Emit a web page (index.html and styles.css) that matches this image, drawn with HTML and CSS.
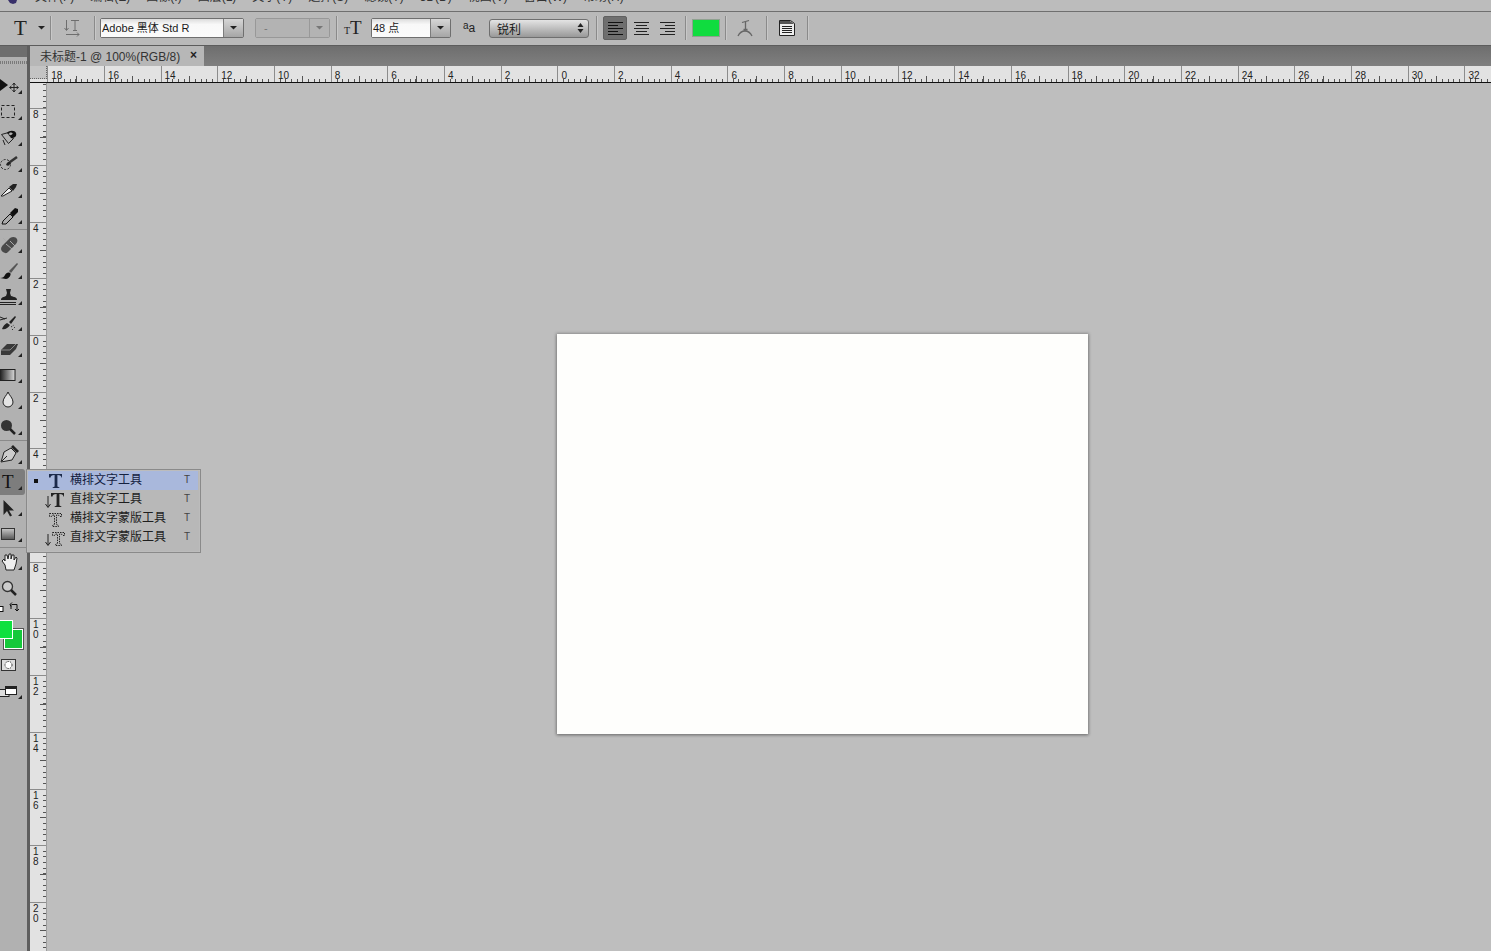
FILE: index.html
```html
<!DOCTYPE html>
<html lang="zh">
<head>
<meta charset="utf-8">
<title>未标题-1</title>
<link rel="stylesheet" href="styles.css">
</head>
<body>
<header class="menubar">
  <svg class="ps-logo" width="10" height="6" viewBox="0 0 10 6"><path d="M0 0h9l-1 3-3 1-3-1z" fill="#38306a"/></svg>
  <nav class="menu-row">
    <span>文件(F)</span><span>编辑(E)</span><span>图像(I)</span><span>图层(L)</span><span>文字(Y)</span><span>选择(S)</span><span>滤镜(T)</span><span>3D(D)</span><span>视图(V)</span><span>窗口(W)</span><span>帮助(H)</span>
  </nav>
</header>

<section class="options">
  <span class="glyph-t">T</span>
  <svg class="opt-arrow" width="7" height="4" viewBox="0 0 7 4"><path d="M0 0h7L3.500 3.500z" fill="#222"/></svg>
  <i class="sep sep-a"></i>
  <svg class="orient" width="17" height="18" viewBox="0 0 17 18" fill="none" stroke="#6e6e6e"><path d="M7 1.500h8M11 1.500v10M9 11.500h4M2.500 1v10M.5 9l2 2.500L4.500 9M2 15.500h13M13 13.500l2 2-2 2"/></svg>
  <i class="sep sep-b"></i>
  <div class="combo combo-font"><span class="combo-value">Adobe 黑体 Std R</span><b class="combo-btn"><svg width="7" height="4" viewBox="0 0 7 4"><path d="M0 0h7L3.500 3.500z" fill="#222"/></svg></b></div>
  <div class="combo combo-off"><span class="combo-value">-</span><b class="combo-btn"><svg width="7" height="4" viewBox="0 0 7 4"><path d="M0 0h7L3.500 3.500z" fill="#777"/></svg></b></div>
  <i class="sep sep-c"></i>
  <span class="size-glyph"><small>T</small>T</span>
  <div class="combo combo-size"><span class="combo-value">48 点</span><b class="combo-btn"><svg width="7" height="4" viewBox="0 0 7 4"><path d="M0 0h7L3.500 3.500z" fill="#222"/></svg></b></div>
  <span class="aa-glyph"><sup>a</sup>a</span>
  <div class="select-aa"><span>锐利</span><svg width="7" height="10" viewBox="0 0 7 10"><path d="M3.500 0L6.500 4h-6zM3.500 10L.5 6h6z" fill="#222"/></svg></div>
  <i class="sep sep-d"></i>
  <div class="align pressed"><svg width="16" height="14" viewBox="0 0 16 14" stroke="#111"><path d="M1 1.500h15M1 4.500h10M1 7.500h15M1 10.500h10M1 13.500h15"/></svg></div>
  <div class="align"><svg width="16" height="14" viewBox="0 0 16 14" stroke="#222"><path d="M1 1.500h15M3 4.500h11M1 7.500h15M3 10.500h11M1 13.500h15"/></svg></div>
  <div class="align"><svg width="16" height="14" viewBox="0 0 16 14" stroke="#222"><path d="M1 1.500h15M6 4.500h10M1 7.500h15M6 10.500h10M1 13.500h15"/></svg></div>
  <i class="sep sep-e"></i>
  <div class="swatch"></div>
  <i class="sep sep-f"></i>
  <svg class="warp" width="16" height="19" viewBox="0 0 16 19" fill="none" stroke="#666" stroke-width="1.300"><path d="M5 3.500L12 1.500M8.500 2.500v8M6.500 10.500h4M1 17c2-4 4-5 7-5s5 1 7 5"/></svg>
  <i class="sep sep-g"></i>
  <svg class="panel" width="16" height="16" viewBox="0 0 16 16"><path d="M.5.5h11l4 3v12H.5z" fill="#eee" stroke="#222"/><path d="M1 1h10l4 3H1z" fill="#555"/><path d="M3 6.500h10M3 8.500h10M3 10.500h10M3 12.500h10" stroke="#222"/></svg>
  <i class="sep sep-h"></i>
</section>

<main class="main">
  <aside class="toolbar">
    <div class="tb-head"></div>
    <div class="tb-grip"></div>

    <div class="tool more"><svg width="26" height="26" viewBox="0 0 26 26"><path d="M0 6l8 6-8 6z" fill="#111"/><path d="M10 14.500h8M14 10.500v8M11.500 13l-2 1.500 2 1.500M16.500 13l2 1.500-2 1.500M12.500 12l1.500-2 1.500 2M12.500 17l1.500 2 1.500-2" fill="none" stroke="#222"/></svg></div>
    <div class="tool more"><svg width="26" height="26" viewBox="0 0 26 26"><rect x="1.500" y="6.500" width="13" height="12" fill="none" stroke="#222" stroke-dasharray="3 2"/></svg></div>
    <div class="tool more"><svg width="26" height="26" viewBox="0 0 26 26"><path d="M1.500 9.500l7 9 5-5c-3-1-5-3-5-6z" fill="none" stroke="#222"/><path d="M7 8c2-3 8-3 9 0s-1 5-5 5l-1-3c3 0 3-2 2-2-1-1-3 0-4 1z" fill="#111"/><path d="M3 15l2 5" stroke="#222"/></svg></div>
    <div class="tool more"><svg width="26" height="26" viewBox="0 0 26 26"><circle cx="5.500" cy="13.500" r="5" fill="none" stroke="#222" stroke-dasharray="2 1.500"/><path d="M6 14c1-3 3-4 5-4l-1 3c-1 2-2 2-4 1z" fill="#222"/><path d="M10 11l7-5" stroke="#333" stroke-width="2.500"/></svg></div>
    <div class="tool more"><svg width="26" height="26" viewBox="0 0 26 26"><path d="M1 19l8-8 3 3-9 5z" fill="#eee" stroke="#222"/><path d="M9 10l4-3 4 0-1 3-3 4z" fill="#222"/></svg></div>
    <div class="tool more"><svg width="26" height="26" viewBox="0 0 26 26"><path d="M2 21l1-3 7-7 3 3-7 7z" fill="#aaa" stroke="#111"/><path d="M10 10l5-5 3 1 0 3-5 5z" fill="#111"/></svg></div>
    <i class="tb-sep"></i>
    <div class="tool more"><svg width="26" height="26" viewBox="0 0 26 26"><path d="M3 20c-3-2-2-5 0-7l7-7c3-2 6-1 7 1s0 4-2 6l-7 7c-2 2-3 1-5 0z" fill="#4a4a4a"/><path d="M6 12l6 5M10 9l5 5M3 6l3 3" stroke="#aaa"/></svg></div>
    <div class="tool more"><svg width="26" height="26" viewBox="0 0 26 26"><path d="M9 13L17 5l1 1-7 9z" fill="#555"/><path d="M0 20c3 0 4-1 5-3s3-3 5-2-1 6-4 6z" fill="#111"/></svg></div>
    <div class="tool more"><svg width="26" height="26" viewBox="0 0 26 26"><path d="M6 5h5l-1 4 1 3c3 1 6 1 6 4H1c0-3 3-3 5-4l1-3z" fill="#222"/><path d="M0 18.500h16M0 20.500h16" stroke="#222"/></svg></div>
    <div class="tool more"><svg width="26" height="26" viewBox="0 0 26 26"><path d="M0 10l7-2M0 7l5 2" stroke="#222"/><path d="M2 19c1-3 3-5 5-6l3 2c-2 3-5 5-8 4zM9 12l6-6 1 1-5 7z" fill="#222"/><path d="M11 17l3-2M12 20l3-3" stroke="#333" stroke-dasharray="1.500 1.500"/></svg></div>
    <div class="tool more"><svg width="26" height="26" viewBox="0 0 26 26"><path d="M1 14l6-6h11l-2 5-6 6H1z" fill="#3a3a3a"/><path d="M1 14h9l6-6" fill="none" stroke="#888"/></svg></div>
    <div class="tool more"><svg width="26" height="26" viewBox="0 0 26 26"><defs><linearGradient id="grad"><stop offset="0" stop-color="#111"/><stop offset="1" stop-color="#ddd"/></linearGradient></defs><rect x="-1" y="7.500" width="16" height="11" fill="url(#grad)" stroke="#222"/></svg></div>
    <div class="tool more"><svg width="26" height="26" viewBox="0 0 26 26"><path d="M8 4c1 3 5 6 5 10a5 5 0 0 1-10 0c0-4 4-7 5-10z" fill="#e4e4e4" stroke="#222"/></svg></div>
    <div class="tool more"><svg width="26" height="26" viewBox="0 0 26 26"><circle cx="6.500" cy="11.500" r="5.500" fill="#333"/><path d="M10 15l5 5" stroke="#222" stroke-width="2.500"/></svg></div>
    <i class="tb-sep"></i>
    <div class="tool more"><svg width="26" height="26" viewBox="0 0 26 26"><path d="M1 19l3-10 7-4 5 5-4 7z" fill="#ccc" stroke="#222"/><path d="M11 4l2-2 6 6-2 2z" fill="#222"/><path d="M2 18l5-5" stroke="#222"/></svg></div>
    <div class="tool more active"><span class="tool-t">T</span></div>
    <div class="tool more"><svg width="26" height="26" viewBox="0 0 26 26"><path d="M3.500 5v15l3.500-4 3 5.500 2-1-3-5h5z" fill="#222"/></svg></div>
    <div class="tool more"><svg width="26" height="26" viewBox="0 0 26 26"><defs><linearGradient id="rect" x2="0" y2="1"><stop offset="0" stop-color="#c8c8c8"/><stop offset="1" stop-color="#555"/></linearGradient></defs><rect x="1.500" y="7.500" width="13" height="11" fill="url(#rect)" stroke="#333"/></svg></div>
    <i class="tb-sep tb-sep-thin"></i>
    <div class="tool more"><svg width="26" height="26" viewBox="0 0 26 26"><path d="M2 12l3 4 1 5h8l2-6 1-6-1-1-2 3V6h-2l-1 4V5H9L8 10 7 6H5v6l-1-2z" fill="#eee" stroke="#222"/></svg></div>
    <div class="tool"><svg width="26" height="26" viewBox="0 0 26 26"><circle cx="7.500" cy="11.500" r="5" fill="#ccc" stroke="#333" stroke-width="1.300"/><path d="M11 15l5 5" stroke="#222" stroke-width="2.500"/></svg></div>

    <div class="swap-row">
      <svg width="26" height="14" viewBox="0 0 26 14" fill="none" stroke="#111"><rect x="-2" y="5.500" width="5" height="5" fill="#fff"/><path d="M12 3.500h5v6M11 5.500l-1-2 2-2M15 8l2 2 2-2M11 3v5" /></svg>
    </div>
    <div class="colors"><div class="col-bg"></div><div class="col-fg"></div></div>
    <div class="mask"><svg width="26" height="14" viewBox="0 0 26 14"><rect x="1.500" y="1.500" width="14" height="11" fill="#ddd" stroke="#333"/><circle cx="8.500" cy="7" r="3.500" fill="#fff" stroke="#333" stroke-dasharray="1.500 1"/></svg></div>
    <div class="tool more screen"><svg width="26" height="26" viewBox="0 0 26 26"><rect x="-1" y="11.500" width="10" height="7" fill="#ddd" stroke="#222"/><rect x="5.500" y="8.500" width="11" height="8" fill="#fff" stroke="#222"/><path d="M6 9h10v2H6z" fill="#222"/></svg></div>
  </aside>

  <div class="doc-area">
    <div class="tabbar"><div class="tab"><span>未标题-1 @ 100%(RGB/8)</span><b class="tab-x">×</b></div></div>
    <div class="ruler-h">
      <div class="corner"></div>
      <div class="rh-cell">18</div><div class="rh-cell">16</div><div class="rh-cell">14</div><div class="rh-cell">12</div><div class="rh-cell">10</div><div class="rh-cell">8</div><div class="rh-cell">6</div><div class="rh-cell">4</div><div class="rh-cell">2</div><div class="rh-cell">0</div><div class="rh-cell">2</div><div class="rh-cell">4</div><div class="rh-cell">6</div><div class="rh-cell">8</div><div class="rh-cell">10</div><div class="rh-cell">12</div><div class="rh-cell">14</div><div class="rh-cell">16</div><div class="rh-cell">18</div><div class="rh-cell">20</div><div class="rh-cell">22</div><div class="rh-cell">24</div><div class="rh-cell">26</div><div class="rh-cell">28</div><div class="rh-cell">30</div><div class="rh-cell">32</div>
    </div>
    <div class="work-row">
      <div class="ruler-v">
        <div class="rv-cell rv-first"></div>
        <div class="rv-cell">8</div><div class="rv-cell">6</div><div class="rv-cell">4</div><div class="rv-cell">2</div><div class="rv-cell">0</div><div class="rv-cell">2</div><div class="rv-cell">4</div><div class="rv-cell">6</div><div class="rv-cell">8</div><div class="rv-cell">10</div><div class="rv-cell">12</div><div class="rv-cell">14</div><div class="rv-cell">16</div><div class="rv-cell">18</div><div class="rv-cell">20</div>
      </div>
      <div class="workspace"><div class="canvas"></div></div>
    </div>
  </div>
</main>

<div class="flyout">
  <div class="fly-row selected"><i class="fly-dot"></i><svg class="fly-icon" width="20" height="18" viewBox="0 0 20 18"><path d="M4 2h13v3.600h-.6c0-1.600-1-2.600-4-2.600v11.600l2 .8v.6H7.600v-.6l2-.8V3c-3 0-4 1-4 2.600H4z" fill="#1c2a4a"/></svg><span class="fly-label">横排文字工具</span><span class="fly-key">T</span></div>
  <div class="fly-row"><i class="fly-dot none"></i><svg class="fly-icon" width="20" height="18" viewBox="0 0 20 18"><path d="M6 2h13v3.600h-.6c0-1.600-1-2.600-4-2.600v11.600l2 .8v.6H9.600v-.6l2-.8V3c-3 0-4 1-4 2.600H6z" fill="#222"/><path d="M3 5v11M.5 13L3 16.500 5.500 13" fill="none" stroke="#222"/></svg><span class="fly-label">直排文字工具</span><span class="fly-key">T</span></div>
  <div class="fly-row"><i class="fly-dot none"></i><svg class="fly-icon" width="20" height="18" viewBox="0 0 20 18"><path d="M4.500 3.500h12v3h-2c0-1-1-1.500-3-1.500v9.500l2 1v1h-6v-1l2-1V5c-2 0-3 .5-3 1.500h-2z" fill="none" stroke="#222" stroke-dasharray="1.500 1"/></svg><span class="fly-label">横排文字蒙版工具</span><span class="fly-key">T</span></div>
  <div class="fly-row"><i class="fly-dot none"></i><svg class="fly-icon" width="20" height="18" viewBox="0 0 20 18"><path d="M7.500 3.500h12v3h-2c0-1-1-1.500-3-1.500v9.500l2 1v1h-6v-1l2-1V5c-2 0-3 .5-3 1.500h-2z" fill="none" stroke="#222" stroke-dasharray="1.500 1"/><path d="M3 5v11M.5 13L3 16.500 5.500 13" fill="none" stroke="#222"/></svg><span class="fly-label">直排文字蒙版工具</span><span class="fly-key">T</span></div>
</div>
</body>
</html>
```
FILE: styles.css
```css
* { box-sizing: border-box; }
html, body { margin: 0; height: 951px; overflow: hidden; }
body {
  background: #bebebe;
  color: #1a1a1a;
  font-family: "Liberation Sans", "Noto Sans CJK SC", sans-serif;
  font-size: 11px;
  display: flex;
  flex-direction: column;
  position: relative;
}
svg { display: block; flex: none; }

.menubar {
  height: 12px;
  flex: none;
  background: #bcbcbc;
  border-bottom: 1px solid #6f6f6f;
  overflow: hidden;
  display: flex;
  align-items: flex-start;
  padding-left: 8px;
}
.ps-logo { margin-top: 0; }
.menu-row {
  display: flex;
  gap: 16px;
  margin-left: 17px;
  margin-top: -9px;
  font-size: 12px;
  line-height: 12px;
  color: #333;
}

.options {
  height: 34px;
  flex: none;
  background: #b9b9b9;
  border-bottom: 1px solid #5c5c5c;
  display: flex;
  align-items: center;
  padding-bottom: 1px;
}
.glyph-t {
  font: 21px/24px "Liberation Serif", serif;
  margin-left: 14px;
  width: 14px;
  color: #222;
}
.opt-arrow { margin-left: 10px; }
.sep { display: block; width: 1px; height: 24px; background: #8a8a8a; flex: none; box-shadow: 1px 0 0 #c8c8c8; }
.sep-a { margin-left: 5px; }
.orient { margin-left: 13px; }
.sep-b { margin-left: 13px; }
.combo {
  height: 20px;
  display: flex;
  border: 1px solid #6f6f6f;
  border-radius: 2px;
  flex: none;
  font-size: 11px;
  line-height: 18px;
}
.combo-value { flex: 1; padding-left: 1px; background: linear-gradient(#dcdcdc, #f8f8f8 30%, #fbfbfb); white-space: nowrap; overflow: hidden; }
.combo-btn {
  width: 20px;
  flex: none;
  background: linear-gradient(#d6d6d6, #a6a6a6);
  border-left: 1px solid #7c7c7c;
  display: flex;
  align-items: center;
  justify-content: center;
}
.combo-font { width: 144px; margin-left: 5px; }
.combo-off { width: 75px; margin-left: 11px; border-color: #989898; color: #777; }
.combo-off .combo-value { background: #b3b3b3; padding-left: 8px; }
.combo-off .combo-btn { background: #b3b3b3; border-left-color: #999; }
.sep-c { margin-left: 6px; }
.size-glyph { font: 19px/24px "Liberation Serif", serif; margin-left: 7px; width: 17px; display: flex; align-items: flex-end; color: #222; }
.size-glyph small { font-size: 10px; line-height: 19px; }
.combo-size { width: 80px; margin-left: 10px; }
.aa-glyph { font: 12px/16px "Liberation Sans", sans-serif; margin-left: 12px; width: 14px; color: #222; display: flex; align-items: flex-end; }
.aa-glyph sup { font-size: 10px; line-height: 12px; vertical-align: baseline; align-self: flex-start; }
.select-aa {
  width: 100px;
  height: 19px;
  margin-left: 12px;
  border: 1px solid #6f6f6f;
  border-radius: 3px;
  background: linear-gradient(#e4e4e4, #989898);
  flex: none;
  display: flex;
  align-items: center;
  justify-content: space-between;
  padding: 0 4px 0 7px;
  font-size: 12px;
}
.sep-d { margin-left: 7px; }
.align { width: 24px; height: 24px; margin-left: 2px; display: flex; align-items: center; justify-content: center; flex: none; border-radius: 2px; }
.align.pressed { background: #6f6f6f; border: 1px solid #606060; margin-left: 6px; }
.sep-e { margin-left: 6px; }
.swatch { width: 28px; height: 18px; margin-left: 6px; background: #10dc3f; border: 1px solid #8fa08f; flex: none; }
.sep-f { margin-left: 5px; }
.warp { margin-left: 11px; }
.sep-g { margin-left: 13px; }
.panel { margin-left: 12px; }
.sep-h { margin-left: 12px; }

.main { flex: 1; display: flex; min-height: 0; }

.toolbar {
  width: 30px;
  flex: none;
  background: #b1b1b1;
  border-right: 3px solid #5e5e5e;
  display: flex;
  flex-direction: column;
}
.tb-head { height: 11px; flex: none; background: #6e6e6e; }
.tb-grip {
  height: 16px;
  flex: none;
  background: repeating-linear-gradient(90deg, #7a7a7a 0 1px, transparent 1px 2px) 0 4px / 100% 3px no-repeat;
}
.tool { height: 26px; flex: none; position: relative; }
.tool.more::after {
  content: "";
  position: absolute;
  left: 18px;
  top: 17px;
  width: 4px;
  height: 4px;
  background: #222;
  clip-path: polygon(100% 0, 100% 100%, 0 100%);
}
.tool.active { background: #7d7d7d; border-radius: 0 3px 3px 0; width: 25px; }
.tool-t { display: block; font: 19px/26px "Liberation Serif", serif; padding-left: 2px; color: #111; }
.tb-sep { display: block; height: 3px; flex: none; border-top: 1px solid #8a8a8a; border-bottom: 1px solid #b1b1b1; }
.tb-sep-thin { height: 2px; }
.swap-row { height: 15px; flex: none; }
.colors { height: 35px; margin-top: 2px; flex: none; position: relative; }
.col-fg { position: absolute; left: -2px; top: 2px; width: 15px; height: 19px; background: #0fe03f; border: 1px solid #fff; }
.col-bg { position: absolute; left: 4px; top: 11px; width: 19px; height: 20px; background: #15c83a; border: 1px solid #fff; outline: 1px solid #555; }
.mask { height: 14px; flex: none; margin-top: 5px; }
.screen { margin-top: 6px; }

.doc-area { flex: 1; min-width: 0; display: flex; flex-direction: column; }
.tabbar {
  height: 20px;
  flex: none;
  background: linear-gradient(#6e6e6e, #7f7f7f);
  display: flex;
}
.tab {
  width: 174px;
  background: #b7b7b7;
  display: flex;
  align-items: center;
  justify-content: space-between;
  padding: 0 7px 2px 10px;
  font-size: 12px;
  color: #333;
  white-space: nowrap;
}
.tab-x { font-size: 12px; color: #222; }

.ruler-h {
  height: 17px;
  flex: none;
  display: flex;
  background: #e2e2e2;
  border-bottom: 1px solid #111;
  overflow: hidden;
}
.corner {
  width: 17.2px;
  flex: none;
  background: #c4c4c4;
  border-right: 1px dotted #666;
  border-bottom: 1px dotted #666;
  margin-bottom: 3px;
}
.rh-cell {
  width: 56.7px;
  flex: none;
  padding: 4px 0 0 4px;
  font-size: 10px;
  line-height: 11px;
  color: #222;
  background:
    linear-gradient(#8c8c8c, #8c8c8c) 0 0 / 1px 100% no-repeat,
    linear-gradient(#555, #555) 28.35px 100% / 1px 6px no-repeat,
    repeating-linear-gradient(90deg, #555 0 1px, transparent 1px 5.67px) 0 100% / 100% 3px no-repeat;
}
.work-row { flex: 1; display: flex; min-height: 0; }
.ruler-v {
  width: 17px;
  flex: none;
  background: #e2e2e2;
  border-right: 1px solid #9c9c9c;
  overflow: hidden;
}
.rv-cell {
  height: 56.7px;
  width: 16px;
  padding: 2px 6px 0 3px;
  font-size: 10px;
  line-height: 10px;
  color: #222;
  word-break: break-all;
  background:
    linear-gradient(#8c8c8c, #8c8c8c) 0 0 / 100% 1px no-repeat,
    linear-gradient(#555, #555) 100% 28.35px / 6px 1px no-repeat,
    repeating-linear-gradient(180deg, #555 0 1px, transparent 1px 5.67px) 100% 0 / 3px 100% no-repeat;
}
.rv-first { height: 25.3px; background: repeating-linear-gradient(0deg, #555 0 1px, transparent 1px 5.67px) 100% 0 / 3px 100% no-repeat; }
.workspace { flex: 1; background: #bebebe; padding: 251px 0 0 510px; }
.canvas { width: 531px; height: 400px; background: #fefefc; box-shadow: 0 0 3px 1px rgba(0,0,0,.2), 0 1px 3px rgba(0,0,0,.3); }

.flyout {
  position: absolute;
  left: 26px;
  top: 469px;
  width: 175px;
  height: 84px;
  background: #b8b8b8;
  border: 1px solid #8a8a8a;
  padding: 1px 2px 0 1px;
  box-shadow: 0 0 1px #e0e0e0 inset;
  font-size: 12px;
  color: #1e1e1e;
}
.fly-row { height: 19px; display: flex; align-items: center; }
.fly-row.selected { background: #a9b8dc; color: #14213f; }
.fly-dot { width: 4px; height: 4px; background: #111; margin-left: 6px; flex: none; }
.fly-dot.none { background: none; }
.fly-icon { margin-left: 7px; }
.fly-label { margin-left: 5px; width: 114px; flex: none; line-height: 19px; }
.fly-key { font-size: 10px; color: #444; padding-bottom: 2px; }
```
